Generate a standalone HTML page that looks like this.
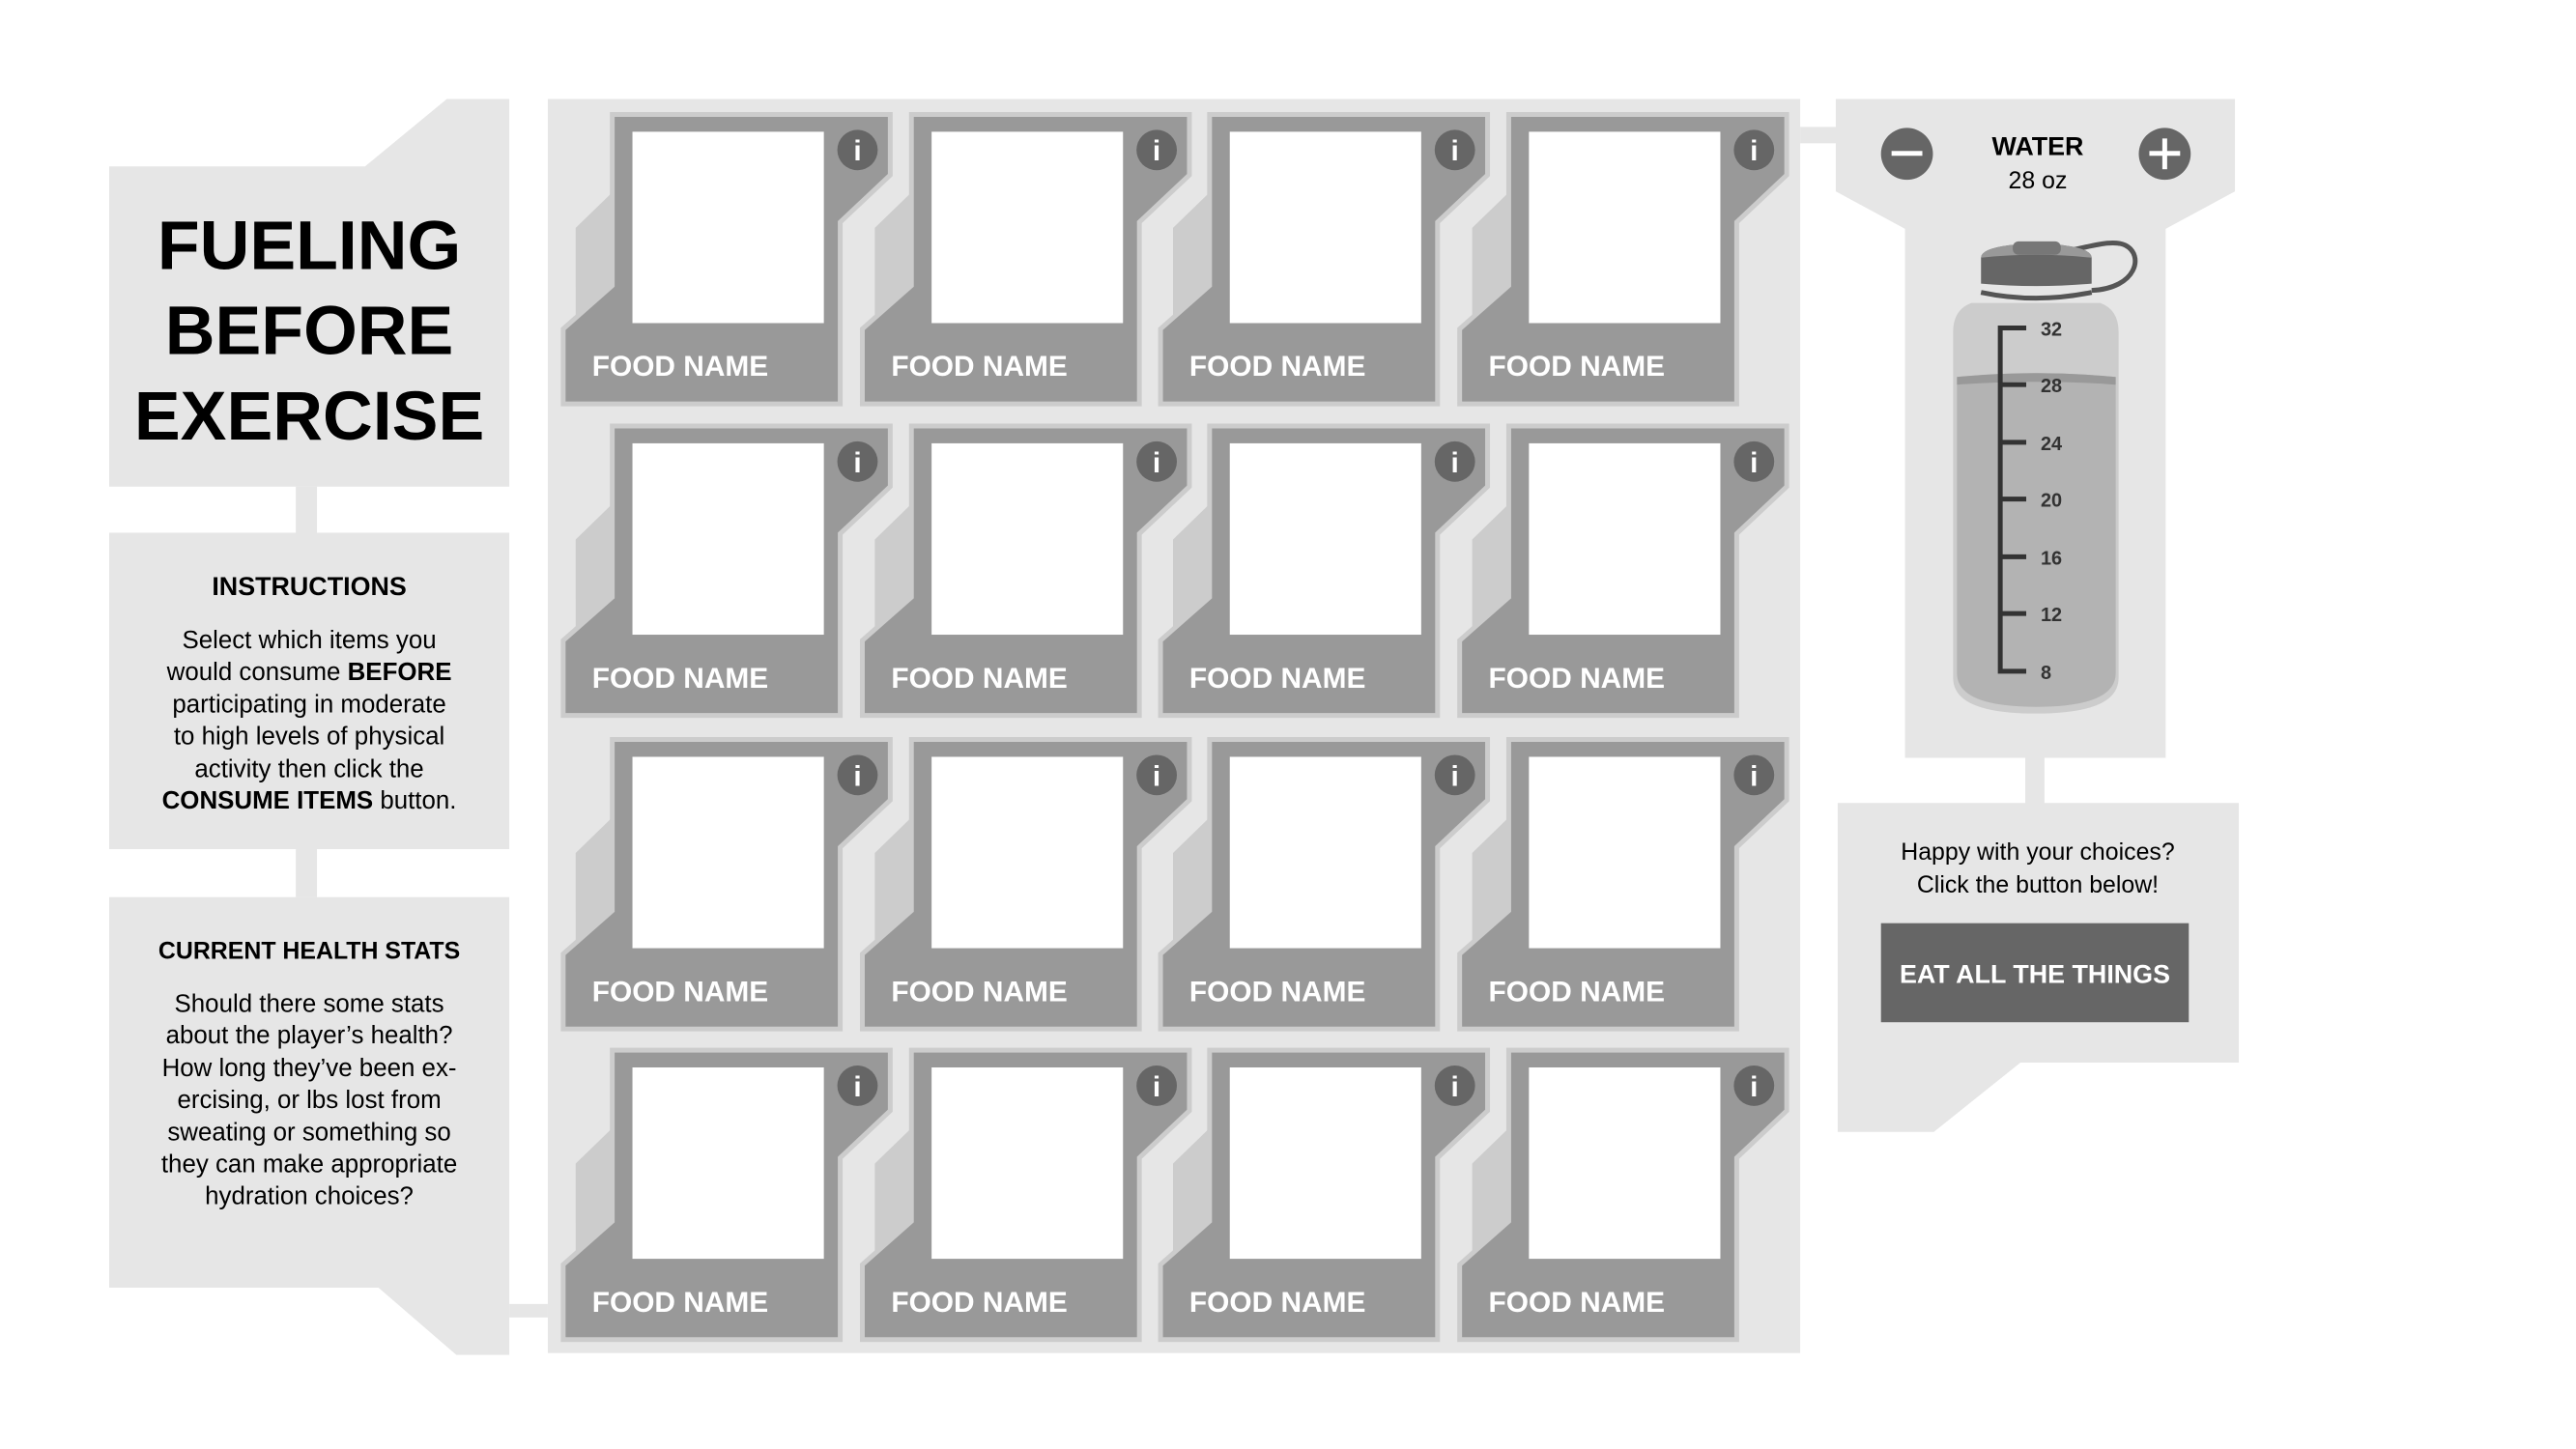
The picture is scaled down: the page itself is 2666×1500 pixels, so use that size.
<!DOCTYPE html>
<html><head><meta charset="utf-8"><style>
html,body{margin:0;padding:0;background:#fff;}
svg{display:block;}
text{font-family:"Liberation Sans",sans-serif;}
</style></head><body>
<svg width="2666" height="1500" viewBox="0 0 2666 1500" xmlns="http://www.w3.org/2000/svg">
<defs>
<g id="card">
  <polygon points="51,0 340,0 340,63 288,112 288,301 0,301 0,223 51,178" fill="#999" stroke="#ccc" stroke-width="5"/>
  <polygon points="49,83 13,118 13,213 49,180" fill="#ccc"/>
  <rect x="72" y="18" width="199" height="199" fill="#fff"/>
  <circle cx="306" cy="37" r="21" fill="#666"/>
  <text x="306" y="48" font-size="30" font-weight="bold" fill="#fff" text-anchor="middle">i</text>
  <text x="30" y="272" font-size="30" font-weight="bold" fill="#fff">FOOD NAME</text>
</g>
</defs>
<g transform="translate(0.5,-1) scale(0.9955)">
<g fill="#e6e6e6">
  <polygon points="113,174 379,174 464,104 529,104 529,507 113,507"/>
  <rect x="307" y="507" width="22" height="48"/>
  <rect x="113" y="555" width="416" height="329"/>
  <rect x="307" y="884" width="22" height="50"/>
  <polygon points="113,934 529,934 529,1410 474,1410 393,1340 113,1340"/>
  <rect x="529" y="1357" width="40" height="14"/>
  <rect x="569" y="104" width="1302" height="1304"/>
  <rect x="1871" y="133" width="40" height="17"/>
  <polygon points="1908,104 2323,104 2323,200 2251,239 2251,789 1980,789 1980,239 1908,200"/>
  <rect x="2105" y="789" width="20" height="48"/>
  <polygon points="1910,836 2327,836 2327,1106 2100,1106 2010,1178 1910,1178"/>
</g>
<g text-anchor="middle" fill="#000">
  <text x="321" y="281" font-size="72" font-weight="bold">FUELING</text>
  <text x="321" y="369" font-size="72" font-weight="bold">BEFORE</text>
  <text x="321" y="458" font-size="72" font-weight="bold">EXERCISE</text>
  <text x="321" y="620" font-size="27" font-weight="bold">INSTRUCTIONS</text>
  <g font-size="26">
    <text x="321" y="675">Select which items you</text>
    <text x="321" y="708">would consume <tspan font-weight="bold">BEFORE</tspan></text>
    <text x="321" y="742">participating in moderate</text>
    <text x="321" y="775">to high levels of physical</text>
    <text x="321" y="809">activity then click the</text>
    <text x="321" y="842"><tspan font-weight="bold">CONSUME ITEMS</tspan> button.</text>
  </g>
  <text x="321" y="998" font-size="25" font-weight="bold">CURRENT HEALTH STATS</text>
  <g font-size="26">
    <text x="321" y="1053">Should there some stats</text>
    <text x="321" y="1086">about the player’s health?</text>
    <text x="321" y="1120">How long they’ve been ex-</text>
    <text x="321" y="1153">ercising, or lbs lost from</text>
    <text x="321" y="1187">sweating or something so</text>
    <text x="321" y="1220">they can make appropriate</text>
    <text x="321" y="1253">hydration choices?</text>
  </g>
</g>
<use href="#card" x="585" y="120"/><use href="#card" x="896" y="120"/><use href="#card" x="1206" y="120"/><use href="#card" x="1517" y="120"/>
<use href="#card" x="585" y="444"/><use href="#card" x="896" y="444"/><use href="#card" x="1206" y="444"/><use href="#card" x="1517" y="444"/>
<use href="#card" x="585" y="770"/><use href="#card" x="896" y="770"/><use href="#card" x="1206" y="770"/><use href="#card" x="1517" y="770"/>
<use href="#card" x="585" y="1093"/><use href="#card" x="896" y="1093"/><use href="#card" x="1206" y="1093"/><use href="#card" x="1517" y="1093"/>
<circle cx="1982" cy="161" r="27" fill="#666"/>
<rect x="1966" y="158" width="32" height="5" fill="#fff"/>
<circle cx="2250" cy="161" r="27" fill="#666"/>
<rect x="2234" y="158" width="32" height="5" fill="#fff"/>
<rect x="2247.5" y="145" width="5" height="32" fill="#fff"/>
<text x="2118" y="162" font-size="27" font-weight="bold" text-anchor="middle">WATER</text>
<text x="2118" y="197" font-size="25" text-anchor="middle">28 oz</text>
<g transform="translate(9,1)">
<path d="M2133,262 C2160,258 2185,248 2200,255 C2220,265 2212,300 2165,302" fill="none" stroke="#555" stroke-width="5"/>
<path d="M2040,315 Q2021,322 2021,345 L2021,705 Q2021,742 2107,742 Q2193,742 2193,705 L2193,345 Q2193,322 2174,315 Z" fill="#ccc"/>
<path d="M2025,392 Q2107,384 2190,392 L2190,700 Q2190,735 2107,735 Q2025,735 2025,700 Z" fill="#b3b3b3"/>
<path d="M2025,392 Q2107,384 2190,392 L2190,400 Q2107,394 2025,400 Z" fill="#999"/>
<path d="M2050,304 Q2107,316 2165,304" fill="none" stroke="#555" stroke-width="5"/>
<path d="M2050,268 Q2050,255 2107,253 Q2165,255 2165,268 L2165,295 Q2107,300 2050,295 Z" fill="#666"/>
<path d="M2050,268 Q2050,255 2107,253 Q2165,255 2165,268 Q2107,262 2050,268 Z" fill="#999"/>
<rect x="2083" y="251" width="50" height="14" rx="6" fill="#777"/>
<g stroke="#333" stroke-width="5" fill="none">
  <path d="M2097,341 L2070,341 L2070,698 L2097,698"/>
  <path d="M2070,400 H2097 M2070,460 H2097 M2070,519 H2097 M2070,579 H2097 M2070,638 H2097"/>
</g>
<g font-size="20" font-weight="bold" fill="#333">
  <text x="2112" y="349">32</text><text x="2112" y="408">28</text><text x="2112" y="468">24</text>
  <text x="2112" y="527">20</text><text x="2112" y="587">16</text><text x="2112" y="646">12</text>
  <text x="2112" y="706">8</text>
</g>
</g>
<text x="2118" y="895" font-size="25" text-anchor="middle">Happy with your choices?</text>
<text x="2118" y="929" font-size="25" text-anchor="middle">Click the button below!</text>
<rect x="1955" y="961" width="320" height="103" fill="#666"/>
<text x="2115" y="1023" font-size="27" font-weight="bold" fill="#fff" text-anchor="middle">EAT ALL THE THINGS</text>
</g>
</svg>
</body></html>
